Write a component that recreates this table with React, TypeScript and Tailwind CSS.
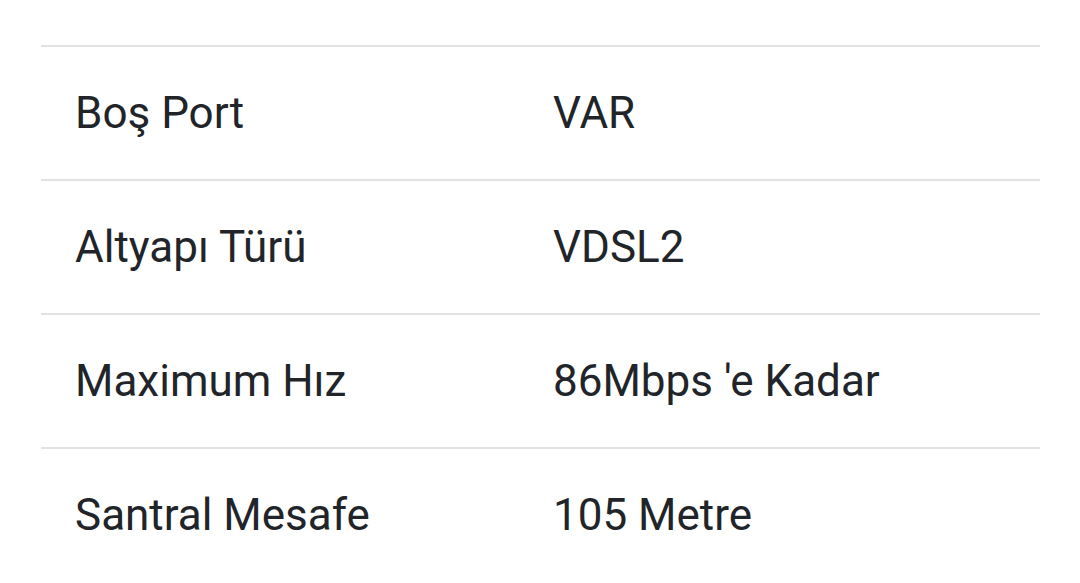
const rows = [
  { label: 'Boş Port', value: 'VAR' },
  { label: 'Altyapı Türü', value: 'VDSL2' },
  { label: 'Maximum Hız', value: "86Mbps 'e Kadar" },
  { label: 'Santral Mesafe', value: '105 Metre' },
];

const App = () => {
  return (
    <div className="w-[1080px] h-[583px] overflow-hidden bg-white font-['Roboto',sans-serif] text-[#212529]">
      <div className="pt-[45px] pl-[41px] pr-[40px]">
        {rows.map((row) => (
          <div
            key={row.label}
            className="grid grid-cols-[512px_1fr] items-center h-[134px] border-t-2 border-[#e2e2e2] text-[44px] leading-none"
          >
            <span className="pl-[34px]">{row.label}</span>
            <span>{row.value}</span>
          </div>
        ))}
      </div>
    </div>
  );
};

export default App;
